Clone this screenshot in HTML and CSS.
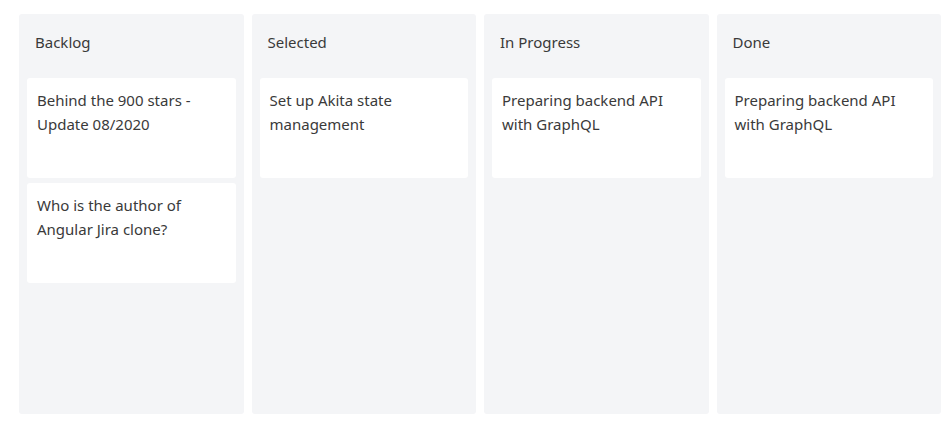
FILE: index.html
```html
<!DOCTYPE html>
<html lang="en">

<head>
  <meta charset="UTF-8" />
  <meta name="viewport" content="width=device-width, initial-scale=1.0" />
  <title>Board</title>
  <link rel="stylesheet" href="styles.css">
</head>

<body>

  <div class="board">

    <div class="lane">
      <div class="lane-title">Backlog</div>
      <div class="card">Behind the 900 stars - Update 08/2020</div>
      <div class="card">Who is the author of Angular Jira clone?</div>
    </div>

    <div class="lane">
      <div class="lane-title">Selected</div>
      <div class="card">Set up Akita state management</div>
    </div>

    <div class="lane">
      <div class="lane-title">In Progress</div>
      <div class="card">Preparing backend API with GraphQL</div>
    </div>

    <div class="lane">
      <div class="lane-title">Done</div>
      <div class="card">Preparing backend API with GraphQL</div>
    </div>

  </div>

</body>

</html>
```

FILE: styles.css
```css
body {
    margin: 0;
    font-family: "Noto Sans", "Open Sans", Arial, sans-serif;
    background-color: #ffffff;
    color: #3a3a3a;
  }

  .board {
    display: flex;
    gap: 8px;
    padding: 14px 11px 0 19px;
  }

  .lane {
    flex: 1;
    height: 400px;
    background-color: #f4f5f7;
    border-radius: 3px;
    padding: 0 8px;
    box-sizing: border-box;
    display: flex;
    flex-direction: column;
    gap: 5px;
  }

  .lane-title {
    font-size: 15px;
    line-height: 24px;
    padding: 16px 8px 19px;
  }

  .card {
    background-color: #ffffff;
    border-radius: 3px;
    height: 100px;
    box-sizing: border-box;
    padding: 10px 10px;
    font-size: 15px;
    line-height: 24px;
  }
```
